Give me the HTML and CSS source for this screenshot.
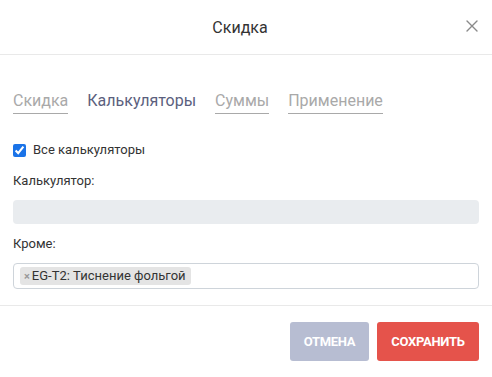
FILE: index.html
```html
<!DOCTYPE html>
<html lang="ru">
<head>
<meta charset="utf-8">
<link rel="stylesheet" href="styles.css">
</head>
<body>
<div class="modal">
  <div class="modal-header">
    <div class="modal-title">Скидка</div>
    <button class="close" aria-label="Закрыть">
      <svg width="12" height="12" viewBox="0 0 12 12"><path d="M1 1L11 11M11 1L1 11" stroke="#8a8a8a" stroke-width="1.4" stroke-linecap="round"/></svg>
    </button>
  </div>
  <div class="modal-body">
    <div class="tabs">
      <span class="tab">Скидка</span>
      <span class="tab active">Калькуляторы</span>
      <span class="tab">Суммы</span>
      <span class="tab">Применение</span>
    </div>
    <label class="check-row">
      <input type="checkbox" checked>
      <span>Все калькуляторы</span>
    </label>
    <div class="field-label">Калькулятор:</div>
    <div class="input disabled"></div>
    <div class="field-label">Кроме:</div>
    <div class="input tags">
      <span class="tag"><span class="tag-x">×</span>EG-T2: Тиснение фольгой</span>
    </div>
  </div>
  <div class="modal-footer">
    <button class="btn btn-cancel">ОТМЕНА</button>
    <button class="btn btn-save">СОХРАНИТЬ</button>
  </div>
</div>
</body>
</html>
```
FILE: styles.css
```css
html, body {
  margin: 0;
  padding: 0;
  background: #fff;
}
body {
  font-family: Roboto, "Liberation Sans", sans-serif;
  color: #333;
}
.modal {
  width: 492px;
}
.modal-header {
  height: 54px;
  border-bottom: 1px solid #e9e9e9;
  display: flex;
  align-items: center;
  justify-content: center;
  padding-right: 12px;
  position: relative;
}
.modal-title {
  font-size: 16px;
  color: #333;
}
.close {
  position: absolute;
  right: 14px;
  top: 20px;
  border: 0;
  background: none;
  padding: 0;
  width: 12px;
  height: 12px;
  display: flex;
}
.modal-body {
  padding: 36px 13px 16px;
}
.tabs {
  display: flex;
  gap: 19px;
  margin-bottom: 28px;
}
.tab {
  font-size: 16px;
  line-height: 20px;
  color: #a9a9a9;
  padding-bottom: 2px;
  border-bottom: 1px solid #a9a9a9;
}
.tab.active {
  color: #5b5f7e;
  border-bottom-color: transparent;
}
.check-row {
  display: flex;
  align-items: center;
  gap: 7px;
  font-size: 13px;
  line-height: 16px;
  margin-bottom: 15px;
}
.check-row input {
  margin: 0;
  width: 13px;
  height: 13px;
  accent-color: #1a73e8;
}
.field-label {
  font-size: 13px;
  line-height: 16px;
  margin-bottom: 11px;
}
.input {
  height: 24px;
  border-radius: 4px;
  box-sizing: border-box;
}
.input.disabled {
  background: #e9ecef;
  margin-bottom: 12px;
}
.input.tags {
  height: 26px;
  border: 1px solid #ced4da;
  display: flex;
  align-items: center;
  padding: 0 6px;
}
.tag {
  background: #e4e4e4;
  border-radius: 3px;
  font-size: 13px;
  line-height: 17px;
  padding: 0 5px 0 4px;
  color: #333;
}
.tag-x {
  color: #999;
  font-weight: bold;
  font-size: 11px;
  margin-right: 2px;
}
.modal-footer {
  border-top: 1px solid #e9e9e9;
  display: flex;
  justify-content: flex-end;
  gap: 8px;
  padding: 16px 13px;
}
.btn {
  height: 39px;
  border: 0;
  border-radius: 3px;
  color: #fff;
  font-family: Roboto, "Liberation Sans", sans-serif;
  font-weight: bold;
  font-size: 13px;
  padding: 0;
  letter-spacing: -0.3px;
}
.btn-cancel {
  background: #b7bdd2;
  width: 79px;
}
.btn-save {
  background: #e5534b;
  width: 102px;
}
```
